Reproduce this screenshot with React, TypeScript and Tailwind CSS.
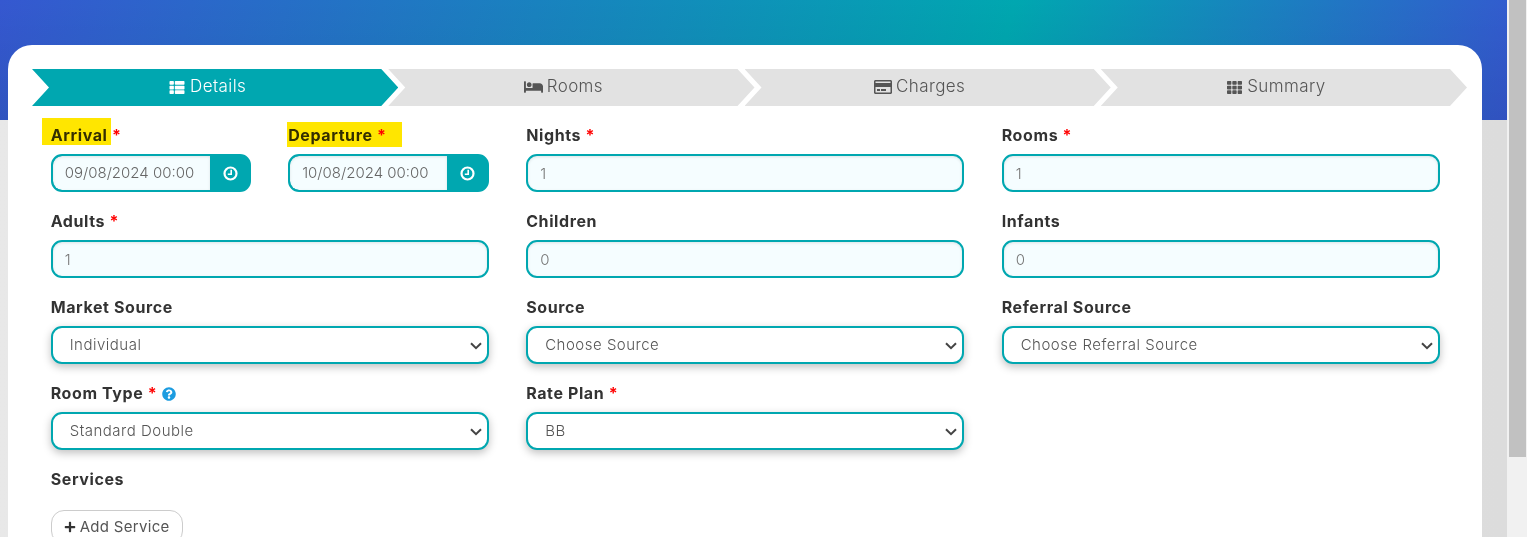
import { FaBed, FaRegCreditCard, FaPlus, FaThList, FaTh, FaQuestionCircle } from "react-icons/fa";

const stepShape =
  "[clip-path:polygon(0_0,calc(100%-17px)_0,100%_50%,calc(100%-17px)_100%,0_100%,17px_50%)]";

function Step({ icon, label, active }: { icon: React.ReactNode; label: string; active?: boolean }) {
  return (
    <div
      className={`flex h-[37px] w-[366.25px] shrink-0 items-center justify-center gap-[4px] pr-[16px] pb-[1px] text-[17px] font-light tracking-[0.4px] ${stepShape} ${
        active ? "bg-[#00a7b0] text-white" : "bg-[#e2e2e2] text-[#555]"
      }`}
    >
      {icon}
      <span>{label}</span>
    </div>
  );
}

function Req() {
  return <span className="text-[#f00]"> *</span>;
}

function Label({ children }: { children: React.ReactNode }) {
  return (
    <label className="mb-[7px] block h-[20px] text-[16px] leading-[17px] font-bold tracking-[0.6px] text-[#333]">
      {children}
    </label>
  );
}

function TextField({ label, value, required }: { label: string; value: string; required?: boolean }) {
  return (
    <div>
      <Label>
        {label}
        {required && <Req />}
      </Label>
      <input
        readOnly
        value={value}
        className="h-[38px] w-full rounded-[11px] border-2 border-[#00a7b0] bg-[#f5fdff] px-3 text-[15px] font-light text-[#777] shadow-[inset_0_1px_3px_rgba(0,0,0,0.1)] outline-none"
      />
    </div>
  );
}

function SelectField({ label, value }: { label: React.ReactNode; value: string }) {
  return (
    <div>
      <Label>{label}</Label>
      <div className="relative">
        <select
          defaultValue={value}
          className="h-[38px] w-full appearance-none rounded-[11px] border-2 border-[#00a7b0] bg-white px-[17px] text-[15px] font-light tracking-[0.5px] text-[#555] shadow-[0_3px_8px_rgba(0,0,0,0.25)] outline-none"
        >
          <option>{value}</option>
        </select>
        <svg viewBox="0 0 12 8" className="pointer-events-none absolute top-[16px] right-[7px] h-[8px] w-[12px]" fill="none">
          <path d="M1 1.2 6 6.2 11 1.2" stroke="#444" strokeWidth="2" />
        </svg>
      </div>
    </div>
  );
}

function ClockIcon() {
  return (
    <svg viewBox="0 0 15 15" className="h-[15px] w-[15px]" fill="none" stroke="white">
      <circle cx="7.5" cy="7.5" r="6" strokeWidth="2.2" />
      <path d="M8.2 3.8V8.2H4.8" strokeWidth="1.6" />
    </svg>
  );
}

function DateField({ label, value, mark }: { label: string; value: string; mark: string }) {
  return (
    <div>
      <Label>
        <span className="relative">
          <span className={`absolute bg-[#ffe600] mix-blend-multiply ${mark}`} />
          {label}
        </span>
        <Req />
      </Label>
      <div className="flex h-[38px] overflow-hidden rounded-[11px] border-2 border-[#00a7b0] bg-[#00a7b0]">
        <input
          readOnly
          value={value}
          className="w-[157px] min-w-0 rounded-l-[9px] bg-[#f5fdff] pl-3 text-[15px] font-light text-[#666] shadow-[inset_0_1px_3px_rgba(0,0,0,0.1)] outline-none"
        />
        <div className="flex flex-1 items-center justify-center pl-[2px]">
          <ClockIcon />
        </div>
      </div>
    </div>
  );
}

export default function App() {
  return (
    <div className="flex h-[537px] overflow-hidden bg-[#e6e6e6] font-['Inter','Liberation_Sans',sans-serif]">
      <div className="w-[1507px] shrink-0 bg-gradient-to-r from-[#e8e8e8] to-[#dcdcdc]">
        <div className="h-[120px] bg-[linear-gradient(to_bottom,rgba(0,0,0,0),rgba(0,0,0,0.08)),linear-gradient(105deg,#3558d0_0%,#00a7b0_66%,#3558d0_100%)]" />
        <div className="mt-[-75px] ml-2 h-[600px] w-[1474px] rounded-t-[24px] bg-white pt-6 pl-6">
          <div className="flex [&>*+*]:ml-[-10px]">
            <Step active icon={<FaThList className="h-[15px] w-[18px]" />} label="Details" />
            <Step icon={<FaBed className="h-[16px] w-[19px]" />} label="Rooms" />
            <Step icon={<FaRegCreditCard className="h-[16px] w-[18px]" />} label="Charges" />
            <Step icon={<FaTh className="h-[15px] w-[17px]" />} label="Summary" />
          </div>

          <div className="mt-[21px] ml-[18.7px] grid w-[1389px] grid-cols-3 gap-x-[37.5px] gap-y-[21px]">
            <div className="grid grid-cols-2 gap-x-[37px]">
              <DateField label="Arrival" value="09/08/2024 00:00" mark="-top-[7px] -left-[9px] h-[27px] w-[69px]" />
              <DateField label="Departure" value="10/08/2024 00:00" mark="-top-[3px] -left-px h-[25px] w-[115px]" />
            </div>
            <TextField label="Nights" value="1" required />
            <TextField label="Rooms" value="1" required />

            <TextField label="Adults" value="1" required />
            <TextField label="Children" value="0" />
            <TextField label="Infants" value="0" />

            <SelectField label="Market Source" value="Individual" />
            <SelectField label="Source" value="Choose Source" />
            <SelectField label="Referral Source" value="Choose Referral Source" />

            <SelectField
              label={
                <span className="flex items-center gap-[5px]">
                  <span>
                    Room Type
                    <Req />
                  </span>
                  <FaQuestionCircle className="h-[14px] w-[14px] text-[#1c9ce0]" />
                </span>
              }
              value="Standard Double"
            />
            <SelectField
              label={
                <>
                  Rate Plan
                  <Req />
                </>
              }
              value="BB"
            />
            <div />

            <div className="col-span-3">
              <Label>Services</Label>
              <button
                type="button"
                className="mt-[19px] flex h-[34px] items-center gap-[4px] rounded-[13px] border border-[#ccc] bg-white px-3 text-[15px] tracking-[0.3px] text-[#555]"
              >
                <FaPlus className="h-[12px] w-[12px] text-[#333]" />
                Add Service
              </button>
            </div>
          </div>
        </div>
      </div>
      <div className="flex-1 bg-[#f1f1f1] pt-0 pr-px pl-[2px]">
        <div className="h-[457px] bg-[#c1c1c1]" />
      </div>
    </div>
  );
}
